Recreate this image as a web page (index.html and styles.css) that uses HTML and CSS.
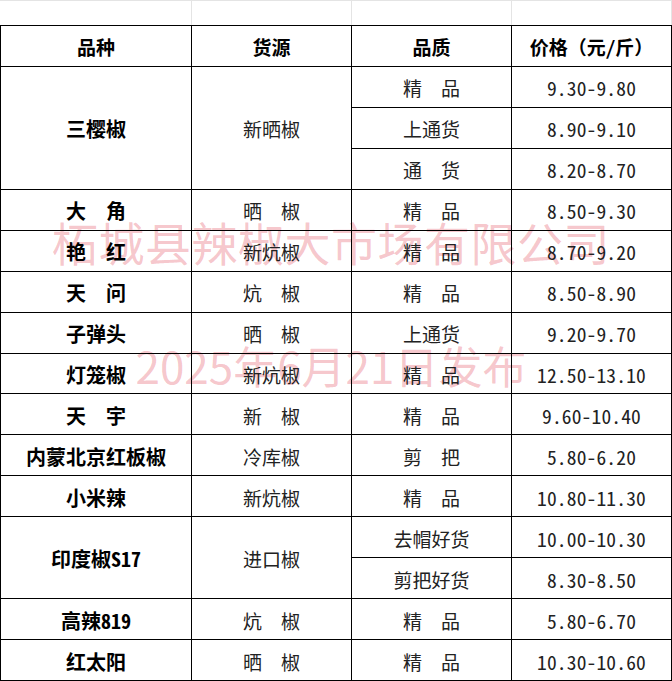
FILE: index.html
```html
<!DOCTYPE html>
<html lang="zh-CN">
<head>
<meta charset="utf-8">
<title>价格表</title>
<link rel="stylesheet" href="styles.css">
</head>
<body>
<div class="page">
  <div class="gridbar">
    <div></div><div></div><div></div><div></div>
  </div>
  <div class="table">
    <div class="c h">品种</div>
    <div class="c h">货源</div>
    <div class="c h">品质</div>
    <div class="c h">价格（元/斤）</div>

    <div class="c k span3">三樱椒</div>
    <div class="c s span3">新晒椒</div>
    <div class="c s">精　品</div>
    <div class="c p">9.30-9.80</div>
    <div class="c s">上通货</div>
    <div class="c p">8.90-9.10</div>
    <div class="c s">通　货</div>
    <div class="c p">8.20-8.70</div>

    <div class="c k">大　角</div>
    <div class="c s">晒　椒</div>
    <div class="c s">精　品</div>
    <div class="c p">8.50-9.30</div>

    <div class="c k">艳　红</div>
    <div class="c s">新炕椒</div>
    <div class="c s">精　品</div>
    <div class="c p">8.70-9.20</div>

    <div class="c k">天　问</div>
    <div class="c s">炕　椒</div>
    <div class="c s">精　品</div>
    <div class="c p">8.50-8.90</div>

    <div class="c k">子弹头</div>
    <div class="c s">晒　椒</div>
    <div class="c s">上通货</div>
    <div class="c p">9.20-9.70</div>

    <div class="c k">灯笼椒</div>
    <div class="c s">新炕椒</div>
    <div class="c s">精　品</div>
    <div class="c p">12.50-13.10</div>

    <div class="c k">天　宇</div>
    <div class="c s">新　椒</div>
    <div class="c s">精　品</div>
    <div class="c p">9.60-10.40</div>

    <div class="c k">内蒙北京红板椒</div>
    <div class="c s">冷库椒</div>
    <div class="c s">剪　把</div>
    <div class="c p">5.80-6.20</div>

    <div class="c k">小米辣</div>
    <div class="c s">新炕椒</div>
    <div class="c s">精　品</div>
    <div class="c p">10.80-11.30</div>

    <div class="c k span2">印度椒S17</div>
    <div class="c s span2">进口椒</div>
    <div class="c s">去帽好货</div>
    <div class="c p">10.00-10.30</div>
    <div class="c s">剪把好货</div>
    <div class="c p">8.30-8.50</div>

    <div class="c k">高辣819</div>
    <div class="c s">炕　椒</div>
    <div class="c s">精　品</div>
    <div class="c p">5.80-6.70</div>

    <div class="c k">红太阳</div>
    <div class="c s">晒　椒</div>
    <div class="c s">精　品</div>
    <div class="c p">10.30-10.60</div>
  </div>
  <div class="watermark">
    <div class="wm1">柘城县辣椒大市场有限公司</div>
    <div class="wm2">2025年6月21日发布</div>
  </div>
</div>
</body>
</html>
```

FILE: styles.css
```css
html, body {
  margin: 0;
  padding: 0;
  background: #ffffff;
}

.page {
  position: relative;
  width: 672px;
  height: 681px;
  overflow: hidden;
  font-family: "Noto Sans Mono CJK SC", "Noto Sans CJK SC", sans-serif;
}

.gridbar {
  display: grid;
  grid-template-columns: 1px 191px 160px 160px 160px;
  height: 25px;
  box-sizing: border-box;
  border-top: 1px solid #e4e4e4;
}

.gridbar::before {
  content: "";
}

.gridbar > div {
  border-right: 1px solid #e4e4e4;
  box-sizing: border-box;
}

.table {
  position: relative;
  z-index: 1;
  display: grid;
  grid-template-columns: 191px 160px 160px 160px;
  grid-template-rows: repeat(16, 1fr);
  height: 656px;
  box-sizing: border-box;
  border-top: 1px solid #000;
  border-left: 1px solid #000;
}

.c {
  box-sizing: border-box;
  border-right: 1px solid #000;
  border-bottom: 1px solid #000;
  display: flex;
  align-items: center;
  justify-content: center;
  padding-top: 2px;
  font-size: 19px;
  color: #222;
  white-space: nowrap;
}

.span3 { grid-row: span 3; }
.span2 { grid-row: span 2; }

.h {
  font-weight: 700;
  color: #000;
}

.k {
  font-weight: 700;
  font-size: 20px;
  color: #000;
}

.s {
  font-weight: 400;
}

.p {
  font-size: 19.5px;
  letter-spacing: 0.15px;
  color: #222;
}

.watermark {
  position: absolute;
  z-index: 0;
  top: 217px;
  left: 0;
  width: 662px;
  display: flex;
  flex-direction: column;
  align-items: center;
  gap: 77px;
  pointer-events: none;
  color: rgba(225, 60, 80, 0.30);
  font-family: "Noto Sans CJK SC", sans-serif;
  white-space: nowrap;
}

.wm1 {
  font-size: 46px;
  line-height: 48px;
  letter-spacing: 0.5px;
}

.wm2 {
  font-size: 44px;
  line-height: 46px;
  letter-spacing: 0;
}
```
